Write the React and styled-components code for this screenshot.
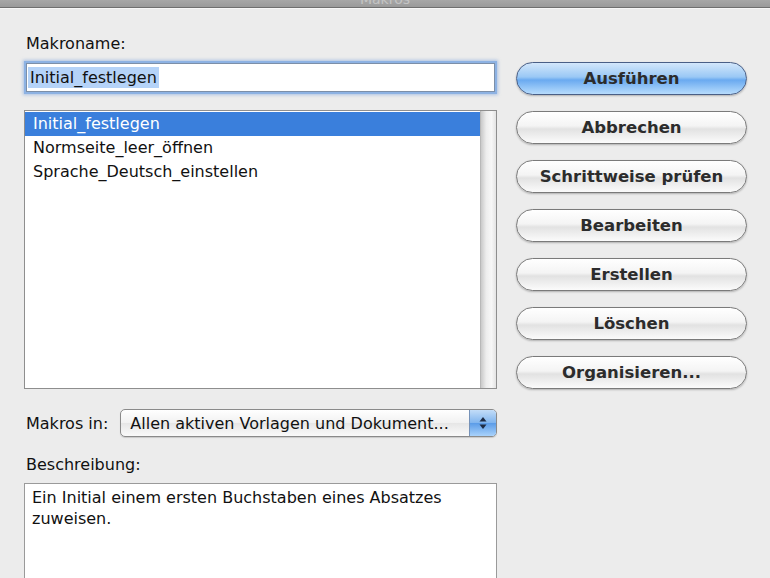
import styled, { createGlobalStyle } from "styled-components";

const GlobalStyle = createGlobalStyle`
  html, body {
    margin: 0;
    padding: 0;
    background: #ececec;
    overflow: hidden;
  }
  body {
    font-family: "DejaVu Sans", "Liberation Sans", sans-serif;
    color: #111;
  }
`;

const Window = styled.div`
  width: 770px;
  height: 578px;
  background: #ececec;
  display: flex;
  flex-direction: column;
  overflow: hidden;
`;

const TitleBar = styled.div`
  height: 7px;
  flex-shrink: 0;
  background: linear-gradient(#a7a7a7, #9a9a9a);
  border-bottom: 1px solid #6f6f6f;
  box-shadow: 0 1px 0 #f6f6f6;
  display: flex;
  justify-content: center;
  overflow: hidden;
`;

const TitleText = styled.span`
  font-size: 14px;
  line-height: 14px;
  margin-top: -8px;
  color: #c4c4c4;
`;

const Body = styled.div`
  display: flex;
  padding: 27px 0 0 24px;
  gap: 19px;
`;

const LeftColumn = styled.div`
  width: 473px;
  display: flex;
  flex-direction: column;
`;

const RightColumn = styled.div`
  width: 231px;
  display: flex;
  flex-direction: column;
  gap: 16px;
  padding-top: 27px;
`;

const Label = styled.div`
  font-size: 16px;
  line-height: 18px;
  padding-left: 2px;
  margin-bottom: ${({ $gap }) => $gap}px;
`;

const TextField = styled.div`
  height: 27px;
  margin: 0 2px 18px 2px;
  background: #fff;
  border: 1px solid #7c8fa8;
  box-shadow: 0 0 0 2px #8db2e3, 0 0 3px 3px rgba(120, 160, 220, 0.55);
  display: flex;
  align-items: center;
  padding-left: 1px;
`;

const Selection = styled.span`
  font-size: 16px;
  line-height: 21px;
  background: #b5d3f8;
  padding: 0 2px;
`;

const ListBox = styled.div`
  height: 277px;
  border: 1px solid #8e8e8e;
  background: #fff;
  display: flex;
`;

const ListRows = styled.div`
  flex: 1;
  padding-top: 1px;
`;

const ListRow = styled.div`
  height: 24px;
  line-height: 23px;
  font-size: 16px;
  padding-left: 8px;
  background: ${({ $selected }) => ($selected ? "#3a7fdc" : "transparent")};
  color: ${({ $selected }) => ($selected ? "#fff" : "#111")};
`;

const ScrollTrack = styled.div`
  width: 15px;
  background: linear-gradient(90deg, #c9c9c9, #ededed 35%, #f7f7f7 70%, #e4e4e4);
  border-left: 1px solid #b8b8b8;
`;

const MacrosRow = styled.div`
  display: flex;
  align-items: center;
  gap: 12px;
  margin-top: 20px;
  margin-bottom: 19px;
`;

const MacrosLabel = styled.span`
  font-size: 16px;
  padding-left: 2px;
`;

const Popup = styled.div`
  flex: 1;
  height: 26px;
  border: 1px solid #8a8a8a;
  border-radius: 5px;
  background: linear-gradient(#ffffff, #f1f1f1 50%, #e6e6e6 51%, #fafafa);
  display: flex;
  align-items: center;
  overflow: hidden;
  box-shadow: 0 1px 1px rgba(0, 0, 0, 0.15);
`;

const PopupText = styled.span`
  flex: 1;
  font-size: 16px;
  padding-left: 9px;
  white-space: nowrap;
`;

const Stepper = styled.div`
  width: 26px;
  height: 100%;
  background: linear-gradient(#c3ddf8, #7fb4ee 50%, #5b9ce8 51%, #a9d2fb);
  border-left: 1px solid #7692b8;
  display: flex;
  align-items: center;
  justify-content: center;
`;

const Description = styled.div`
  height: 100px;
  border: 1px solid #9a9a9a;
  background: #fff;
  font-size: 16px;
  line-height: 21px;
  padding: 3px 7px;
`;

const AquaButton = styled.button`
  height: 33px;
  width: 231px;
  border-radius: 17px;
  border: 1px solid ${({ $default }) => ($default ? "#4a5f86" : "#7a7a7a")};
  background: ${({ $default }) =>
    $default
      ? "linear-gradient(#d3e7fb, #9ac8f5 45%, #6aaaf0 55%, #b7dcfd)"
      : "linear-gradient(#ffffff, #f4f4f4 45%, #e2e2e2 55%, #fbfbfb)"};
  box-shadow: 0 1px 2px rgba(0, 0, 0, 0.25);
  font-family: "DejaVu Sans", "Liberation Sans", sans-serif;
  font-size: 16.5px;
  font-weight: bold;
  color: #2c2c2c;
  padding: 0;
  display: flex;
  align-items: center;
  justify-content: center;
`;

const macros = ["Initial_festlegen", "Normseite_leer_öffnen", "Sprache_Deutsch_einstellen"];

const actions = [
  "Abbrechen",
  "Schrittweise prüfen",
  "Bearbeiten",
  "Erstellen",
  "Löschen",
  "Organisieren...",
];

const App = () => (
  <>
    <GlobalStyle />
    <Window>
      <TitleBar>
        <TitleText>Makros</TitleText>
      </TitleBar>
      <Body>
        <LeftColumn>
          <Label $gap={10}>Makroname:</Label>
          <TextField>
            <Selection>Initial_festlegen</Selection>
          </TextField>
          <ListBox>
            <ListRows>
              {macros.map((name, i) => (
                <ListRow key={name} $selected={i === 0}>
                  {name}
                </ListRow>
              ))}
            </ListRows>
            <ScrollTrack />
          </ListBox>
          <MacrosRow>
            <MacrosLabel>Makros in:</MacrosLabel>
            <Popup>
              <PopupText>Allen aktiven Vorlagen und Dokument...</PopupText>
              <Stepper>
                <svg width="8" height="14" viewBox="0 0 8 14">
                  <path d="M4 1 L7.5 5.5 H0.5 Z" fill="#1d2b44" />
                  <path d="M4 13 L7.5 8.5 H0.5 Z" fill="#1d2b44" />
                </svg>
              </Stepper>
            </Popup>
          </MacrosRow>
          <Label $gap={9}>Beschreibung:</Label>
          <Description>
            Ein Initial einem ersten Buchstaben eines Absatzes zuweisen.
          </Description>
        </LeftColumn>
        <RightColumn>
          <AquaButton $default>Ausführen</AquaButton>
          {actions.map((a) => (
            <AquaButton key={a}>{a}</AquaButton>
          ))}
        </RightColumn>
      </Body>
    </Window>
  </>
);

export default App;
